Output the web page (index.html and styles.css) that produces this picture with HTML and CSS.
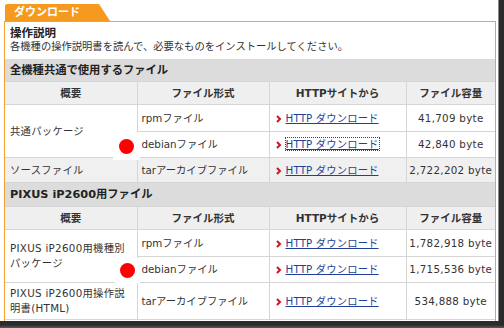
FILE: index.html
```html
<!DOCTYPE html>
<html lang="ja">
<head>
<meta charset="utf-8">
<link rel="stylesheet" href="styles.css">
</head>
<body>
<div class="frame">
  <div class="tab">ダウンロード</div>
  <div class="box">
    <div class="intro">
      <div class="intro-title">操作説明</div>
      <div class="intro-text">各機種の操作説明書を読んで、必要なものをインストールしてください。</div>
    </div>
    <table class="files">
      <colgroup>
        <col class="c1"><col class="c2"><col class="c3"><col class="c4">
      </colgroup>
      <tr class="sec"><td colspan="4">全機種共通で使用するファイル</td></tr>
      <tr class="head"><th>概要</th><th>ファイル形式</th><th>HTTPサイトから</th><th>ファイル容量</th></tr>
      <tr class="r27">
        <td rowspan="2" class="name">共通パッケージ</td>
        <td class="fmt">rpmファイル</td>
        <td class="dl"><span class="arrow"><svg width="6" height="8" viewBox="0 0 6 8"><path d="M1 1 L4 4 L1 7" fill="none" stroke="#d4141c" stroke-width="2"/></svg></span><a href="#">HTTP ダウンロード</a></td>
        <td class="size">41,709 byte</td>
      </tr>
      <tr class="r26">
        <td class="fmt">debianファイル</td>
        <td class="dl"><span class="arrow"><svg width="6" height="8" viewBox="0 0 6 8"><path d="M1 1 L4 4 L1 7" fill="none" stroke="#d4141c" stroke-width="2"/></svg></span><a href="#" class="focus">HTTP ダウンロード</a></td>
        <td class="size">42,840 byte</td>
      </tr>
      <tr class="r25 grey">
        <td class="name">ソースファイル</td>
        <td class="fmt">tarアーカイブファイル</td>
        <td class="dl"><span class="arrow"><svg width="6" height="8" viewBox="0 0 6 8"><path d="M1 1 L4 4 L1 7" fill="none" stroke="#d4141c" stroke-width="2"/></svg></span><a href="#">HTTP ダウンロード</a></td>
        <td class="size">2,722,202 byte</td>
      </tr>
      <tr class="sec sec2"><td colspan="4">PIXUS iP2600用ファイル</td></tr>
      <tr class="head"><th>概要</th><th>ファイル形式</th><th>HTTPサイトから</th><th>ファイル容量</th></tr>
      <tr class="r27">
        <td rowspan="2" class="name">PIXUS iP2600用機種別パッケージ</td>
        <td class="fmt">rpmファイル</td>
        <td class="dl"><span class="arrow"><svg width="6" height="8" viewBox="0 0 6 8"><path d="M1 1 L4 4 L1 7" fill="none" stroke="#d4141c" stroke-width="2"/></svg></span><a href="#">HTTP ダウンロード</a></td>
        <td class="size">1,782,918 byte</td>
      </tr>
      <tr class="r26">
        <td class="fmt">debianファイル</td>
        <td class="dl"><span class="arrow"><svg width="6" height="8" viewBox="0 0 6 8"><path d="M1 1 L4 4 L1 7" fill="none" stroke="#d4141c" stroke-width="2"/></svg></span><a href="#">HTTP ダウンロード</a></td>
        <td class="size">1,715,536 byte</td>
      </tr>
      <tr class="r37">
        <td class="name">PIXUS iP2600用操作説明書(HTML)</td>
        <td class="fmt">tarアーカイブファイル</td>
        <td class="dl"><span class="arrow"><svg width="6" height="8" viewBox="0 0 6 8"><path d="M1 1 L4 4 L1 7" fill="none" stroke="#d4141c" stroke-width="2"/></svg></span><a href="#">HTTP ダウンロード</a></td>
        <td class="size">534,888 byte</td>
      </tr>
    </table>
  </div>
  <div class="mark mark1"><span class="dot"></span></div>
  <div class="mark mark2"><span class="dot"></span></div>
</div>
</body>
</html>
```

FILE: styles.css
```css
html, body {
  margin: 0;
  padding: 0;
}
body {
  width: 504px;
  height: 328px;
  overflow: hidden;
  background: linear-gradient(to bottom, #2b2b2b 0, #2b2b2b 325px, #5a5a5a 328px);
  font-family: "DejaVu Sans", "Noto Sans CJK JP", sans-serif;
  font-size: 10.3px;
  color: #333;
}
.frame {
  position: relative;
  width: 499px;
  height: 321px;
  background: #fff;
  border-right: 1px solid #8a8a8a;
  box-sizing: border-box;
  padding: 4px 0 0 4px;
  overflow: hidden;
}
.tab {
  margin-left: 1px;
  width: 105px;
  height: 17px;
  box-sizing: border-box;
  padding: 2px 0 0 9px;
  background: #f5991f;
  color: #fff;
  font-weight: bold;
  font-size: 11px;
  line-height: 14px;
  border-top-left-radius: 2px;
  clip-path: polygon(0 0, 94px 0, 100% 100%, 0 100%);
}
.box {
  width: 492px;
  height: 310px;
  box-sizing: border-box;
  border: 1px solid #f5a232;
  border-bottom: none;
}
.intro {
  padding: 5px 5px 6px;
  line-height: 13px;
}
.intro-title {
  font-weight: bold;
  font-size: 11.5px;
  color: #222;
}
.files {
  width: 490px;
  border-collapse: collapse;
  table-layout: fixed;
}
.c1 { width: 132px; }
.c2 { width: 132px; }
.c3 { width: 137px; }
.c4 { width: 89px; }
.files td, .files th {
  border: 1px solid #d6d6d6;
  padding: 0;
  line-height: 15px;
}
.files tr > :first-child { border-left: none; }
.files tr > :last-child { border-right: none; }
.sec td {
  background: #dcdcdc;
  font-weight: bold;
  font-size: 11.3px;
  color: #222;
  height: 22px;
  padding-left: 5px;
  border-top: none;
}
.sec2 td { height: 23px; }
.head th {
  background: #efefef;
  font-weight: bold;
  font-size: 10.5px;
  color: #333;
  height: 22px;
  text-align: center;
}
.r27 td { height: 26px; }
.r26 td { height: 25px; }
.r25 td { height: 24px; }
.r37 td { height: 36px; }
.grey td { background: #f0f0f0; }
.name {
  padding-left: 5px !important;
  padding-right: 8px !important;
  letter-spacing: 0.3px;
  vertical-align: middle;
}
.fmt { padding-left: 4px !important; }
.dl { padding-left: 6px !important; white-space: nowrap; }
.size { text-align: center; white-space: nowrap; letter-spacing: 0.3px; }
.arrow {
  display: inline-block;
  width: 10px;
  vertical-align: -1px;
}
.arrow svg { display: block; }
.dl a {
  color: #1f3f99;
  text-decoration: underline;
  letter-spacing: 0.15px;
}
.dl a.focus { outline: 1px dotted #1f3f99; }
.mark {
  position: absolute;
  background: #fff;
  display: flex;
  align-items: center;
  justify-content: center;
}
.mark1 { left: 113px; top: 132px; width: 27px; height: 28px; }
.mark2 { left: 115px; top: 258px; width: 25px; height: 25px; }
.dot {
  width: 15px;
  height: 15px;
  border-radius: 50%;
  background: #f00;
}
```
